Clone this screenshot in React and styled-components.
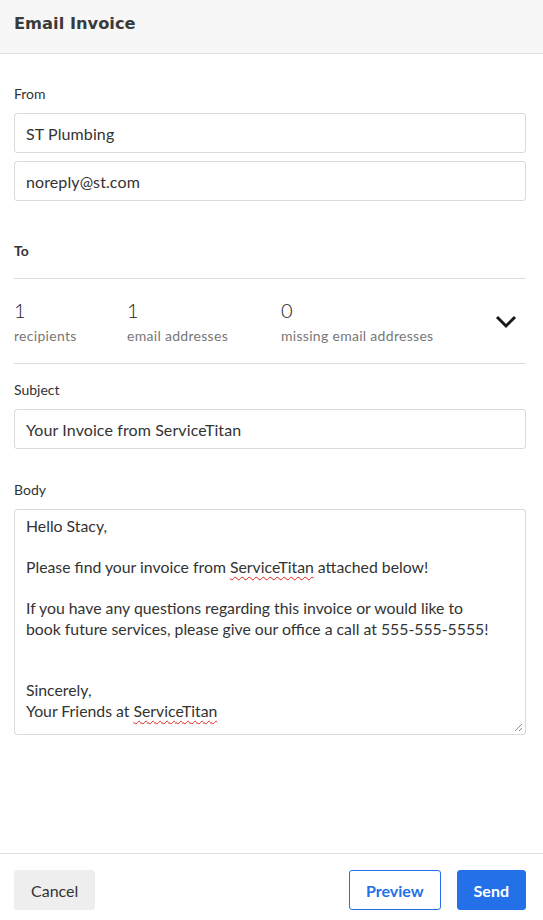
import React from 'react';
import styled, { createGlobalStyle } from 'styled-components';

const GlobalStyle = createGlobalStyle`
  html, body {
    margin: 0;
    padding: 0;
    background: #fff;
  }
  * {
    box-sizing: border-box;
  }
`;

const Page = styled.div`
  width: 543px;
  height: 920px;
  display: flex;
  flex-direction: column;
  font-family: Lato, 'Open Sans', sans-serif;
  color: #333;
`;

const Header = styled.header`
  height: 54px;
  flex-shrink: 0;
  display: flex;
  align-items: center;
  padding: 0 14px 6px;
  background: #f7f7f7;
  border-bottom: 1px solid #e1e1e1;
`;

const Title = styled.h1`
  margin: 0;
  font-family: 'DejaVu Sans', sans-serif;
  font-size: 16.3px;
  font-weight: 700;
  color: #3a3a3a;
`;

const Content = styled.main`
  flex: 1;
  padding: 31px 17px 0 14px;
`;

const Field = styled.section`
  display: flex;
  flex-direction: column;
  gap: 8px;
  margin-top: ${p => p.$top || 0}px;
`;

const Label = styled.div`
  font-size: 14px;
  line-height: 18px;
  font-weight: ${p => (p.$bold ? 700 : 400)};
  color: #333;
  margin-bottom: 2px;
`;

const Input = styled.div`
  height: 40px;
  display: flex;
  align-items: center;
  padding: 0 11px;
  border: 1px solid #dadada;
  border-radius: 3px;
  font-size: 16px;
  letter-spacing: 0.1px;
  color: #333;
`;

const Stats = styled.div`
  display: grid;
  grid-template-columns: 113px 154px 1fr auto;
  align-items: center;
  margin-top: 16px;
  padding: 18px 0 17px;
  border-top: 1px solid #dedede;
  border-bottom: 1px solid #dedede;
`;

const Stat = styled.div`
  display: flex;
  flex-direction: column;
`;

const StatValue = styled.span`
  font-size: 20px;
  line-height: 26px;
  font-weight: 300;
  color: #222;
`;

const StatLabel = styled.span`
  margin-top: 3px;
  font-size: 14px;
  line-height: 20px;
  letter-spacing: 0.3px;
  color: #777;
`;

const Toggle = styled.button`
  border: none;
  background: none;
  padding: 0 9px 0 0;
  display: flex;
  cursor: pointer;
`;

const Body = styled.div`
  position: relative;
  height: 226px;
  padding: 6px 11px;
  border: 1px solid #dadada;
  border-radius: 3px;
  font-size: 15.8px;
  line-height: 20.5px;
  white-space: pre-wrap;
  color: #333;
`;

const Typo = styled.span`
  text-decoration: underline wavy #e02020;
  text-decoration-thickness: 1px;
  text-underline-offset: 3px;
  text-decoration-skip-ink: none;
`;

const Grip = styled.svg`
  position: absolute;
  right: 2px;
  bottom: 2px;
`;

const Footer = styled.footer`
  flex-shrink: 0;
  display: flex;
  align-items: center;
  gap: 16px;
  padding: 16px 17px 10px 14px;
  border-top: 1px solid #e1e1e1;
`;

const Button = styled.button`
  height: 40px;
  padding: 0 16px;
  border-radius: 3px;
  font-family: inherit;
  font-size: 16px;
  font-weight: ${p => (p.$variant === 'ghost' ? 400 : 700)};
  cursor: pointer;
  border: 1px solid
    ${p => (p.$variant === 'ghost' ? '#eeeeee' : '#2370e8')};
  background: ${p =>
    p.$variant === 'primary'
      ? '#2370e8'
      : p.$variant === 'ghost'
      ? '#eeeeee'
      : '#fff'};
  color: ${p =>
    p.$variant === 'primary'
      ? '#fff'
      : p.$variant === 'ghost'
      ? '#333'
      : '#2370e8'};
  margin-left: ${p => (p.$push ? 'auto' : '0')};
`;

const stats = [
  { value: 1, label: 'recipients' },
  { value: 1, label: 'email addresses' },
  { value: 0, label: 'missing email addresses' },
];

const App = () => (
  <>
    <GlobalStyle />
    <Page>
      <Header>
        <Title>Email Invoice</Title>
      </Header>
      <Content>
        <Field>
          <Label>From</Label>
          <Input>ST Plumbing</Input>
          <Input>noreply@st.com</Input>
        </Field>

        <Field $top={41}>
          <Label $bold>To</Label>
        </Field>
        <Stats>
          {stats.map(s => (
            <Stat key={s.label}>
              <StatValue>{s.value}</StatValue>
              <StatLabel>{s.label}</StatLabel>
            </Stat>
          ))}
          <Toggle aria-label="Expand recipients">
            <svg width="22" height="14" viewBox="0 0 22 14">
              <polyline
                points="2,2 11,11 20,2"
                fill="none"
                stroke="#1a1a1a"
                strokeWidth="3"
              />
            </svg>
          </Toggle>
        </Stats>

        <Field $top={17}>
          <Label>Subject</Label>
          <Input>Your Invoice from ServiceTitan</Input>
        </Field>

        <Field $top={32}>
          <Label>Body</Label>
          <Body>
            {'Hello Stacy,\n\nPlease find your invoice from '}
            <Typo>ServiceTitan</Typo>
            {' attached below!\n\nIf you have any questions regarding this invoice or would like to\nbook future services, please give our office a call at 555-555-5555!\n\n\nSincerely,\nYour Friends at '}
            <Typo>ServiceTitan</Typo>
            <Grip width="9" height="9" viewBox="0 0 9 9">
              <line x1="1" y1="8" x2="8" y2="1" stroke="#888" strokeWidth="1" />
              <line x1="5" y1="8" x2="8" y2="5" stroke="#888" strokeWidth="1" />
            </Grip>
          </Body>
        </Field>
      </Content>
      <Footer>
        <Button $variant="ghost">Cancel</Button>
        <Button $variant="outline" $push>
          Preview
        </Button>
        <Button $variant="primary">Send</Button>
      </Footer>
    </Page>
  </>
);

export default App;
